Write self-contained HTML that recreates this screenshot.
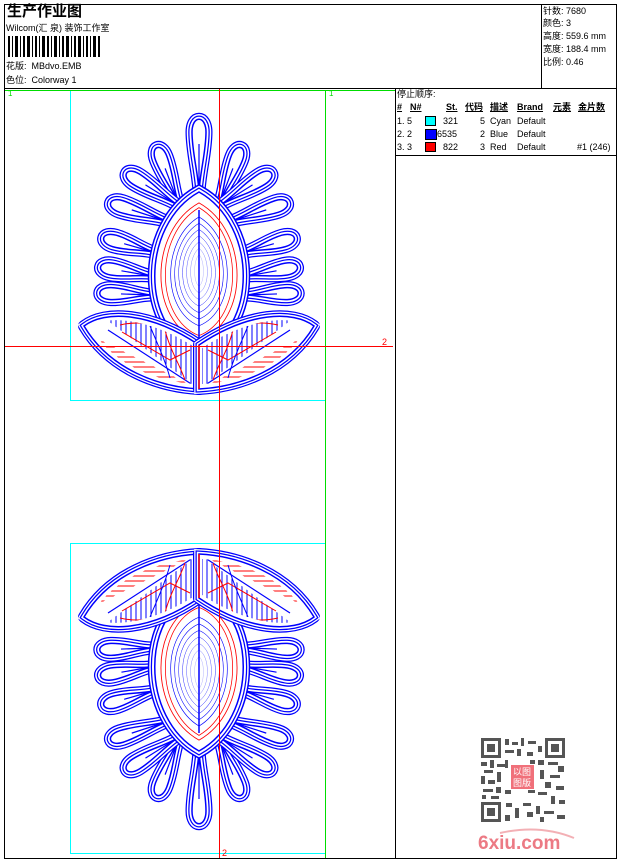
<!DOCTYPE html>
<html><head><meta charset="utf-8"><style>
html,body{margin:0;padding:0;background:#fff;}
body{width:620px;height:860px;position:relative;overflow:hidden;font-family:"Liberation Sans","Noto Sans CJK SC",sans-serif;font-size:9px;color:#000;}
.a{position:absolute;white-space:nowrap;line-height:1;}
.b{font-weight:bold;text-decoration:underline;}
</style></head><body>
<svg width="620" height="860" style="position:absolute;left:0;top:0" xmlns="http://www.w3.org/2000/svg">
<defs>
<path id="pa" d="M0,0 C14,-1 26,-6 40,-6 C55,-6 55,6 40,6 C26,6 14,1 0,0Z"/>
<path id="pb" d="M0,0 C16,-1 30,-6 47,-6 C62,-6 62,6 47,6 C30,6 16,1 0,0Z"/>
<path id="pc" d="M0,0 C20,-1 40,-7 60,-7 C77,-7 77,7 60,7 C40,7 20,1 0,0Z"/>
<g id="PA"><use href="#pa" stroke="#00f" stroke-width="13" fill="none"/><use href="#pa" stroke="#fff" stroke-width="10.5" fill="none"/><use href="#pa" stroke="#00f" stroke-width="7.5" fill="none"/><use href="#pa" stroke="#fff" stroke-width="5" fill="none"/><use href="#pa" stroke="#00f" stroke-width="1.5" fill="#fff"/><line x1="0" y1="0" x2="30" y2="0" stroke="#00f" stroke-width="1.2"/></g>
<g id="PB"><use href="#pb" stroke="#00f" stroke-width="13" fill="none"/><use href="#pb" stroke="#fff" stroke-width="10.5" fill="none"/><use href="#pb" stroke="#00f" stroke-width="7.5" fill="none"/><use href="#pb" stroke="#fff" stroke-width="5" fill="none"/><use href="#pb" stroke="#00f" stroke-width="1.5" fill="#fff"/><line x1="0" y1="0" x2="36" y2="0" stroke="#00f" stroke-width="1.2"/></g>
<g id="PC"><use href="#pc" stroke="#00f" stroke-width="13" fill="none"/><use href="#pc" stroke="#fff" stroke-width="10.5" fill="none"/><use href="#pc" stroke="#00f" stroke-width="7.5" fill="none"/><use href="#pc" stroke="#fff" stroke-width="5" fill="none"/><use href="#pc" stroke="#00f" stroke-width="1.5" fill="#fff"/><line x1="0" y1="0" x2="48" y2="0" stroke="#00f" stroke-width="1.2"/></g>
<path id="lens" d="M0,-78 C59,-45 59,60 0,82 C-59,60 -59,-45 0,-78Z"/>
<path id="leaf" d="M84,326 C105,310 150,312 199,345 L199,389 C160,387 110,370 84,326Z"/>
<clipPath id="lc"><path d="M90,326 C108,315 150,318 196,348 L196,384 C160,382 112,366 90,326Z"/></clipPath>
<pattern id="vh" width="5" height="5" patternUnits="userSpaceOnUse"><rect width="5" height="5" fill="#fff"/><line x1="1" y1="0" x2="1" y2="5" stroke="#00f" stroke-width="1"/></pattern>
<pattern id="hh" width="5" height="5" patternUnits="userSpaceOnUse"><rect width="5" height="5" fill="#fff"/><line x1="0" y1="2" x2="5" y2="2" stroke="#f00" stroke-width="1"/></pattern>
<g id="leafG">
<use href="#leaf" stroke="#00f" stroke-width="12" fill="none" stroke-linejoin="round"/>
<use href="#leaf" stroke="#fff" stroke-width="9.5" fill="none"/>
<use href="#leaf" stroke="#00f" stroke-width="7" fill="none"/>
<use href="#leaf" stroke="#fff" stroke-width="4.5" fill="none"/>
<use href="#leaf" stroke="#00f" stroke-width="1.5" fill="#fff"/>
<g clip-path="url(#lc)">
<path d="M80,300 L199,300 L199,389 Z" fill="url(#vh)"/>
<path d="M80,330 L199,389 L80,389 Z" fill="url(#hh)"/>
<line x1="108" y1="330" x2="199" y2="389" stroke="#00f" stroke-width="1.2"/>
<path d="M120,325 C150,318 175,330 192,345" stroke="#f00" fill="none"/>
<path d="M122,332 L170,360 L190,350" stroke="#f00" fill="none"/>
<path d="M165,330 C170,350 180,365 185,380" stroke="#f00" fill="none"/>
<path d="M150,326 C158,345 165,360 170,378" stroke="#00f" fill="none"/>
</g>
</g>
<g id="design">
<use href="#PC" transform="translate(199,192) rotate(-90)"/>
<use href="#PB" transform="translate(178,202) rotate(-111)"/>
<use href="#PB" transform="translate(220,202) rotate(-69)"/>
<use href="#PB" transform="translate(176,204) rotate(-148)"/>
<use href="#PB" transform="translate(222,204) rotate(-32)"/>
<use href="#PB" transform="translate(166,221) rotate(-162)"/>
<use href="#PB" transform="translate(232,221) rotate(-18)"/>
<use href="#PA" transform="translate(153,252) rotate(-164)"/>
<use href="#PA" transform="translate(245,252) rotate(-16)"/>
<use href="#PA" transform="translate(151,276) rotate(-170)"/>
<use href="#PA" transform="translate(247,276) rotate(-10)"/>
<use href="#PA" transform="translate(151,295) rotate(-178)"/>
<use href="#PA" transform="translate(247,295) rotate(-2)"/>
<g transform="translate(199,270)">
<use href="#lens" stroke="#00f" stroke-width="14" fill="none"/>
<use href="#lens" stroke="#fff" stroke-width="11" fill="none"/>
<use href="#lens" stroke="#00f" stroke-width="8" fill="none"/>
<use href="#lens" stroke="#fff" stroke-width="5.5" fill="none"/>
<use href="#lens" stroke="#00f" stroke-width="1.5" fill="#fff"/>
<use href="#lens" transform="scale(0.86,0.86)" stroke="#f00" fill="none" vector-effect="non-scaling-stroke"/>
<use href="#lens" transform="scale(0.76,0.8)" stroke="#f00" fill="none" vector-effect="non-scaling-stroke"/>
<use href="#lens" transform="scale(0.64,0.68)" stroke="#00f" fill="none" vector-effect="non-scaling-stroke"/>
<use href="#lens" transform="scale(0.55,0.6)" stroke="#00f" fill="none" vector-effect="non-scaling-stroke"/>
<use href="#lens" transform="scale(0.46,0.52)" stroke="#00f" fill="none" vector-effect="non-scaling-stroke"/>
<use href="#lens" transform="scale(0.37,0.44)" stroke="#00f" fill="none" vector-effect="non-scaling-stroke"/>
<use href="#lens" transform="scale(0.28,0.36)" stroke="#00f" fill="none" vector-effect="non-scaling-stroke"/>
<use href="#lens" transform="scale(0.19,0.28)" stroke="#00f" fill="none" vector-effect="non-scaling-stroke"/>
<use href="#lens" transform="scale(0.1,0.2)" stroke="#00f" fill="none" vector-effect="non-scaling-stroke"/>
<line x1="0" y1="-60" x2="0" y2="75" stroke="#00f" stroke-width="1.5"/>
</g>
<use href="#leafG"/>
<use href="#leafG" transform="translate(398,0) scale(-1,1)"/>
<line x1="199" y1="345" x2="199" y2="389" stroke="#f00" stroke-width="1.5"/>
</g>
</defs>
<rect x="70.5" y="90.5" width="255" height="310" fill="none" stroke="#0ff"/>
<rect x="70.5" y="543.5" width="255" height="310" fill="none" stroke="#0ff"/>
<use href="#design"/>
<use href="#design" transform="translate(0,943) scale(1,-1)"/>
<line x1="4" y1="90.5" x2="395" y2="90.5" stroke="#0d0"/>
<line x1="325.5" y1="90" x2="325.5" y2="858" stroke="#0d0"/>
<line x1="219.5" y1="88" x2="219.5" y2="858" stroke="#f00"/>
<line x1="4" y1="346.5" x2="393" y2="346.5" stroke="#f00"/>
<text x="382" y="345" font-family="Liberation Sans" font-size="9" fill="#f00">2</text>
<text x="222" y="856" font-family="Liberation Sans" font-size="9" fill="#f00">2</text>
<text x="329" y="96" font-family="Liberation Sans" font-size="8" fill="#0d0">1</text>
<text x="8" y="96" font-family="Liberation Sans" font-size="8" fill="#0d0">1</text>
<rect x="4.5" y="4.5" width="612" height="854" fill="none" stroke="#000"/>
<line x1="4" y1="88.5" x2="617" y2="88.5" stroke="#000"/>
<line x1="541.5" y1="4" x2="541.5" y2="88" stroke="#000"/>
<line x1="395.5" y1="88" x2="395.5" y2="858" stroke="#000"/>
<line x1="395" y1="155.5" x2="617" y2="155.5" stroke="#000"/>
<g fill="#000">
<rect x="8" y="36" width="2" height="21"/><rect x="12" y="36" width="1" height="21"/><rect x="15" y="36" width="3" height="21"/><rect x="20" y="36" width="1" height="21"/><rect x="23" y="36" width="2" height="21"/><rect x="27" y="36" width="3" height="21"/><rect x="32" y="36" width="1" height="21"/><rect x="35" y="36" width="2" height="21"/><rect x="39" y="36" width="1" height="21"/><rect x="42" y="36" width="3" height="21"/><rect x="47" y="36" width="2" height="21"/><rect x="51" y="36" width="1" height="21"/><rect x="54" y="36" width="3" height="21"/><rect x="59" y="36" width="1" height="21"/><rect x="62" y="36" width="2" height="21"/><rect x="66" y="36" width="3" height="21"/><rect x="71" y="36" width="1" height="21"/><rect x="74" y="36" width="2" height="21"/><rect x="78" y="36" width="3" height="21"/><rect x="83" y="36" width="1" height="21"/><rect x="86" y="36" width="2" height="21"/><rect x="90" y="36" width="1" height="21"/><rect x="93" y="36" width="3" height="21"/><rect x="98" y="36" width="2" height="21"/>
</g>
<g fill="#555">
<rect x="481" y="738" width="84" height="84" fill="#fff"/>
<rect x="481" y="738" width="20" height="20"/><rect x="484" y="741" width="14" height="14" fill="#fff"/><rect x="487" y="744" width="8" height="8"/>
<rect x="545" y="738" width="20" height="20"/><rect x="548" y="741" width="14" height="14" fill="#fff"/><rect x="551" y="744" width="8" height="8"/>
<rect x="481" y="802" width="20" height="20"/><rect x="484" y="805" width="14" height="14" fill="#fff"/><rect x="487" y="808" width="8" height="8"/>
<rect x="505" y="739" width="4" height="6"/><rect x="512" y="742" width="6" height="3"/><rect x="521" y="738" width="3" height="8"/><rect x="528" y="741" width="8" height="3"/><rect x="538" y="746" width="4" height="6"/><rect x="505" y="750" width="9" height="3"/><rect x="517" y="749" width="4" height="7"/><rect x="527" y="752" width="6" height="4"/>
<rect x="481" y="762" width="6" height="4"/><rect x="490" y="760" width="4" height="8"/><rect x="497" y="764" width="8" height="3"/><rect x="484" y="770" width="9" height="3"/><rect x="481" y="776" width="4" height="8"/><rect x="488" y="780" width="7" height="4"/><rect x="497" y="772" width="4" height="10"/><rect x="483" y="789" width="10" height="3"/><rect x="496" y="787" width="5" height="6"/><rect x="482" y="795" width="4" height="4"/><rect x="491" y="796" width="8" height="3"/>
<rect x="538" y="760" width="6" height="5"/><rect x="548" y="762" width="10" height="3"/><rect x="558" y="766" width="6" height="6"/><rect x="540" y="770" width="4" height="9"/><rect x="550" y="775" width="10" height="3"/><rect x="545" y="782" width="6" height="6"/><rect x="556" y="786" width="8" height="4"/><rect x="538" y="792" width="9" height="3"/><rect x="551" y="796" width="4" height="8"/><rect x="559" y="800" width="6" height="4"/><rect x="506" y="803" width="6" height="4"/><rect x="515" y="808" width="4" height="10"/><rect x="523" y="803" width="8" height="3"/><rect x="527" y="812" width="6" height="5"/><rect x="536" y="806" width="4" height="8"/><rect x="544" y="811" width="10" height="3"/><rect x="557" y="815" width="8" height="4"/><rect x="505" y="815" width="5" height="6"/><rect x="540" y="817" width="4" height="5"/>
<rect x="505" y="790" width="6" height="4"/><rect x="528" y="790" width="7" height="3"/><rect x="505" y="760" width="3" height="8"/><rect x="530" y="760" width="5" height="4"/>
<rect x="511" y="765" width="23" height="24" fill="#f0707a"/>
</g>
<text x="513" y="775" font-family="Noto Sans CJK SC" font-size="9" fill="#fff">以图</text>
<text x="513" y="786" font-family="Noto Sans CJK SC" font-size="9" fill="#fff">图版</text>
<path d="M500,833 Q540,824 574,838" stroke="#f3b0b5" stroke-width="2" fill="none"/>
<text x="478" y="849" font-family="Liberation Sans" font-weight="bold" font-size="19" fill="#ec7a84">6xiu.com</text>
</svg>
<div class="a" style="left:7px;top:4px;font-size:15px;font-weight:bold;">生产作业图</div>
<div class="a" style="left:6px;top:24px;">Wilcom(汇 泉) 装饰工作室</div>
<div class="a" style="left:6px;top:62px;">花版:&nbsp; MBdvo.EMB</div>
<div class="a" style="left:6px;top:76px;">色位:&nbsp; Colorway 1</div>
<div class="a" style="left:543px;top:7px;">针数: 7680</div>
<div class="a" style="left:543px;top:19px;">颜色: 3</div>
<div class="a" style="left:543px;top:32px;">高度: 559.6 mm</div>
<div class="a" style="left:543px;top:45px;">宽度: 188.4 mm</div>
<div class="a" style="left:543px;top:58px;">比例: 0.46</div>
<div class="a" style="left:397px;top:90px;">停止顺序:</div>
<div class="a b" style="left:397px;top:103px;">#</div>
<div class="a b" style="left:410px;top:103px;">N#</div>
<div class="a b" style="left:446px;top:103px;">St.</div>
<div class="a b" style="left:465px;top:103px;">代码</div>
<div class="a b" style="left:490px;top:103px;">描述</div>
<div class="a b" style="left:517px;top:103px;">Brand</div>
<div class="a b" style="left:553px;top:103px;">元素</div>
<div class="a b" style="left:578px;top:103px;">金片数</div>
<div class="a" style="left:397px;top:117px;">1. 5</div>
<div class="a" style="left:397px;top:130px;">2. 2</div>
<div class="a" style="left:397px;top:143px;">3. 3</div>
<div style="position:absolute;left:425px;top:116px;width:9px;height:8px;background:#0ff;border:1px solid #000"></div>
<div style="position:absolute;left:425px;top:129px;width:10px;height:9px;background:#00f;border:1px solid #000"></div>
<div style="position:absolute;left:425px;top:142px;width:9px;height:8px;background:#f00;border:1px solid #000"></div>
<div class="a" style="left:443px;top:117px;">321</div>
<div class="a" style="left:437px;top:130px;">6535</div>
<div class="a" style="left:443px;top:143px;">822</div>
<div class="a" style="left:480px;top:117px;">5&nbsp; Cyan</div>
<div class="a" style="left:480px;top:130px;">2&nbsp; Blue</div>
<div class="a" style="left:480px;top:143px;">3&nbsp; Red</div>
<div class="a" style="left:517px;top:117px;">Default</div>
<div class="a" style="left:517px;top:130px;">Default</div>
<div class="a" style="left:517px;top:143px;">Default</div>
<div class="a" style="left:577px;top:143px;">#1 (246)</div>
</body></html>
